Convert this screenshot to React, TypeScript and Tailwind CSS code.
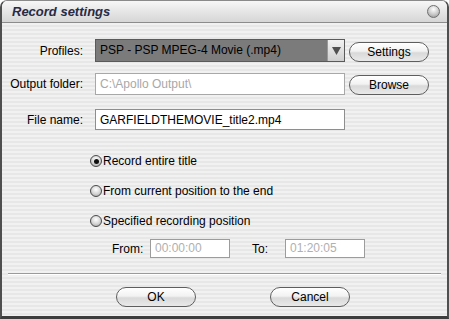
import { useState } from "react"

const font = { fontFamily: '"Liberation Sans", Arial, sans-serif' }

function PillButton({ label }: { label: string }) {
  return (
    <button className="w-[80px] h-[20px] rounded-full border border-[#5e5e5e] bg-[linear-gradient(to_bottom,#ffffff_0%,#f2f2f2_45%,#d9d9d9_55%,#e9e9e9_100%)] text-[12px] text-black leading-none shadow-[inset_0_1px_0_#ffffff]">
      {label}
    </button>
  )
}

function Radio({ checked, label, onClick }: { checked: boolean; label: string; onClick: () => void }) {
  return (
    <div className="flex items-center h-[14px] cursor-default" onClick={onClick}>
      <span className="w-[12px] h-[12px] rounded-full border border-[#4a4a4a] bg-[radial-gradient(circle_at_50%_35%,#ffffff_0%,#d4d4d4_55%,#9a9a9a_100%)] flex items-center justify-center">
        {checked && <span className="w-[5px] h-[5px] rounded-full bg-[#111]" />}
      </span>
      <span className="ml-[1px] text-[12px] text-black">{label}</span>
    </div>
  )
}

export default function App() {
  const [mode, setMode] = useState(0)
  const [fileName, setFileName] = useState("GARFIELDTHEMOVIE_title2.mp4")

  return (
    <div className="w-[449px] h-[319px] bg-white" style={font}>
      <div className="w-full h-full flex flex-col rounded-t-[7px] overflow-hidden border-x-2 border-[#4f4f4f] border-b-[3px] border-b-[#3d3d3d] border-t border-t-[#8a8a8a]">
        {/* title bar */}
        <div className="h-[22px] shrink-0 flex items-center justify-between pl-[10px] pr-[7px] bg-[linear-gradient(to_bottom,#f7f7f7_0%,#e6e6e6_50%,#d6d6d6_100%)] border-b border-[#8c8c8c]">
          <span className="text-[13px] font-bold italic text-[#272b45]">Record settings</span>
          <span className="w-[13px] h-[13px] rounded-full border border-[#6f6f6f] bg-[radial-gradient(circle_at_50%_30%,#ffffff_0%,#c9c9c9_55%,#8e8e8e_100%)]" />
        </div>

        {/* body */}
        <div className="flex-1 flex flex-col bg-[repeating-linear-gradient(to_bottom,#f1f1f1_0px,#f1f1f1_2px,#e7e7e7_2px,#e7e7e7_4px)]">
          <div className="flex items-center mt-[16px] h-[23px]">
            <span className="w-[81px] text-right text-[12px] text-black">Profiles:</span>
            <div className="ml-[12px] w-[250px] h-[23px] flex border border-[#5a5a5a] bg-[#7b7b7b]">
              <span className="flex-1 pl-[4px] text-[12px] leading-[21px] text-black">PSP - PSP MPEG-4 Movie (.mp4)</span>
              <span className="w-[17px] h-full border-l border-[#9a9a9a] bg-[linear-gradient(to_bottom,#f2f2f2,#cfcfcf)] flex items-center justify-center">
                <svg width="9" height="8" viewBox="0 0 9 8"><path d="M0 0H9L4.5 8Z" fill="#505050" /></svg>
              </span>
            </div>
            <div className="ml-[4px]"><PillButton label="Settings" /></div>
          </div>

          <div className="flex items-center mt-[11px] h-[22px]">
            <span className="w-[81px] text-right text-[12px] text-black">Output folder:</span>
            <div className="ml-[12px] w-[250px] h-[22px] border border-[#a8a8a8] bg-white pl-[4px] text-[12px] leading-[20px] text-[#a8a8a8]">C:\Apollo Output\</div>
            <div className="ml-[4px]"><PillButton label="Browse" /></div>
          </div>

          <div className="flex items-center mt-[14px] h-[21px]">
            <span className="w-[81px] text-right text-[12px] text-black">File name:</span>
            <input
              value={fileName}
              onChange={(e) => setFileName(e.target.value)}
              className="ml-[12px] w-[250px] h-[21px] border border-[#8e8e8e] bg-white pl-[4px] text-[12px] text-black outline-none"
            />
          </div>

          <div className="ml-[88px] mt-[24px] flex flex-col gap-[16px]">
            <Radio checked={mode === 0} label="Record entire title" onClick={() => setMode(0)} />
            <Radio checked={mode === 1} label="From current position to the end" onClick={() => setMode(1)} />
            <Radio checked={mode === 2} label="Specified recording position" onClick={() => setMode(2)} />
          </div>

          <div className="flex items-center mt-[11px] h-[19px]">
            <span className="ml-[110px] w-[38px] text-[12px] text-black">From:</span>
            <div className="w-[80px] h-[19px] border border-[#9c9c9c] bg-white pl-[4px] text-[12px] leading-[17px] text-[#b0b0b0]">00:00:00</div>
            <span className="ml-[22px] w-[33px] text-[12px] text-black">To:</span>
            <div className="w-[80px] h-[19px] border border-[#9c9c9c] bg-white pl-[4px] text-[12px] leading-[17px] text-[#b0b0b0]">01:20:05</div>
          </div>

          <div className="mt-[15px] mx-[6px] h-[2px] border-t border-[#9a9a9a] border-b border-b-white" />

          <div className="flex mt-[9px] h-[20px]">
            <div className="ml-[114px]"><PillButton label="OK" /></div>
            <div className="ml-[74px]"><PillButton label="Cancel" /></div>
          </div>
        </div>
      </div>
    </div>
  )
}
